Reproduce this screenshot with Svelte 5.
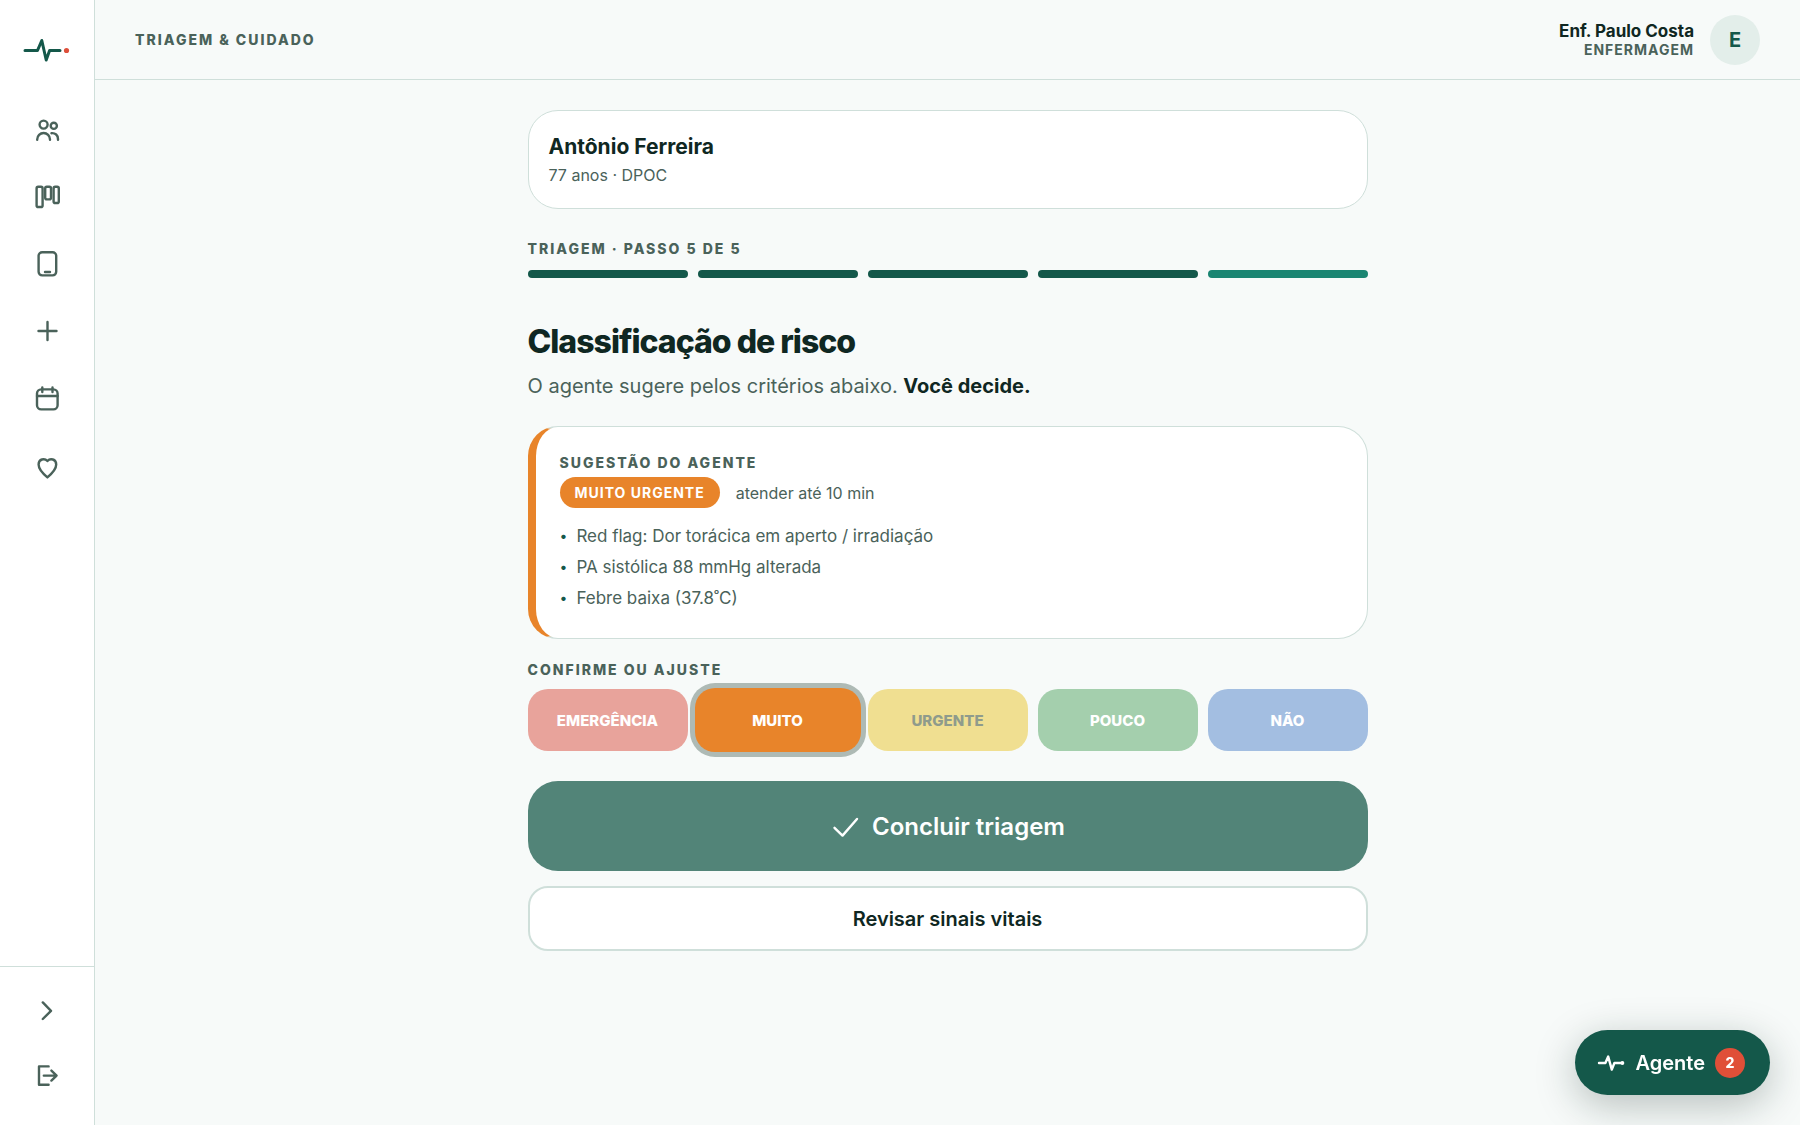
<script lang="ts">
  const user = { name: "Enf. Paulo Costa", role: "Enfermagem" };
  const patient = { name: "Antônio Ferreira", age: 77, condition: "DPOC" };

  const step = 5;
  const steps = [1, 2, 3, 4, 5];

  const reasons = [
    "Red flag: Dor torácica em aperto / irradiação",
    "PA sistólica 88 mmHg alterada",
    "Febre baixa (37.8˚C)",
  ];

  const levels = [
    { id: "emergencia", label: "Emergência" },
    { id: "muito", label: "Muito" },
    { id: "urgente", label: "Urgente" },
    { id: "pouco", label: "Pouco" },
    { id: "nao", label: "Não" },
  ];

  let selected = $state("muito");
</script>

<div class="app">
  <aside class="sidebar">
    <a class="logo" href="#inicio" aria-label="Início">
      <svg width="48" height="28" viewBox="0 0 48 28">
        <path d="M2 14.5h12.5l4.3-10L23.2 24l3.4-9.5H37" />
        <circle cx="43.5" cy="14.5" r="2.6" />
      </svg>
    </a>

    <nav aria-label="Principal">
      <a href="#pacientes" aria-label="Pacientes">
        <svg class="icon" viewBox="0 0 28 28">
          <circle cx="10.6" cy="8.6" r="4" />
          <circle cx="20.8" cy="9.8" r="3.1" />
          <path d="M4.2 23.8v-.4a6.4 6.4 0 0 1 12.8 0v.4M18.400 17.2c3.900-.4 6.600 2 6.600 5.800v.8" />
        </svg>
      </a>
      <a href="#quadro" aria-label="Quadro">
        <svg class="icon" viewBox="0 0 28 28">
          <rect x="3.6" y="3.800" width="6" height="20.200" rx="1.6" />
          <rect x="12.200" y="3.800" width="5.8" height="12.600" rx="1.6" />
          <rect x="20.600" y="3.800" width="5.2" height="16.200" rx="1.6" />
        </svg>
      </a>
      <a href="#dispositivo" aria-label="Dispositivo">
        <svg class="icon" viewBox="0 0 28 28">
          <rect x="5.600" y="2.200" width="17.6" height="23.2" rx="3.600" />
          <path d="M12 22h5" />
        </svg>
      </a>
      <a href="#novo" aria-label="Novo">
        <svg class="icon" viewBox="0 0 28 28">
          <path d="M14.5 5v18M5.500 14h18" />
        </svg>
      </a>
      <a href="#agenda" aria-label="Agenda">
        <svg class="icon" viewBox="0 0 28 28">
          <rect x="4" y="5.400" width="20.6" height="20" rx="4.2" />
          <path d="M4 12h20.600M9.300 3.400v4.600M19.500 3.400v4.600" />
        </svg>
      </a>
      <a href="#cuidado" aria-label="Cuidado">
        <svg class="icon" viewBox="0 0 28 28">
          <path d="M14.4 26.400C9.800 22.600 5.600 18.400 5.600 13.600c0-5.800 6-6.600 8.800-3.600 2.800-3 8.800-2.200 8.800 3.600 0 4.800-4.200 9-8.800 12.800z" />
        </svg>
      </a>
    </nav>

    <div class="bottom">
      <button aria-label="Expandir menu">
        <svg class="icon" viewBox="0 0 28 28">
          <path d="M9.800 5.400l8.2 8.400-8.2 8.200" />
        </svg>
      </button>
      <button aria-label="Sair">
        <svg class="icon" viewBox="0 0 28 28">
          <path d="M15.600 4.400H6v18.400h9.600M10.800 13.600h12.800M18.400 8.600l5.200 5-5.200 5" />
        </svg>
      </button>
    </div>
  </aside>

  <div class="page">
    <header>
      <span class="eyebrow">Triagem &amp; Cuidado</span>
      <div class="user">
        <div class="who">
          <strong>{user.name}</strong>
          <span>{user.role}</span>
        </div>
        <span class="avatar">{user.name[0]}</span>
      </div>
    </header>

    <main>
      <section class="patient">
        <h2>{patient.name}</h2>
        <p>{patient.age} anos · {patient.condition}</p>
      </section>

      <span class="eyebrow">Triagem · Passo {step} de {steps.length}</span>
      <div class="steps">
        {#each steps as n}
          <span class:current={n === step}></span>
        {/each}
      </div>

      <h1>Classificação de risco</h1>
      <p class="lead">
        O agente sugere pelos critérios abaixo. <strong>Você decide.</strong>
      </p>

      <section class="suggestion">
        <span class="eyebrow">Sugestão do agente</span>
        <div class="verdict">
          <span class="pill">Muito urgente</span>
          <span>atender até 10 min</span>
        </div>
        <ul>
          {#each reasons as reason}
            <li>{reason}</li>
          {/each}
        </ul>
      </section>

      <span class="eyebrow" id="levels-label">Confirme ou ajuste</span>
      <div class="levels" role="group" aria-labelledby="levels-label">
        {#each levels as level}
          <button
            class={level.id}
            class:selected={selected === level.id}
            aria-pressed={selected === level.id}
            onclick={() => (selected = level.id)}
          >
            {level.label}
          </button>
        {/each}
      </div>

      <button class="finish">
        <svg width="30" height="30" viewBox="0 0 30 30">
          <path d="M4.500 16.800l8 7.800L27 8" />
        </svg>
        Concluir triagem
      </button>
      <button class="review">Revisar sinais vitais</button>
    </main>
  </div>

  <button class="agent">
    <svg width="28" height="20" viewBox="0 0 28 20">
      <path d="M2 10h6.4l2.8-6.4 3.6 13L17.400 10H25" />
      <circle cx="25.400" cy="10" r="1.900" />
    </svg>
    Agente
    <span class="count">2</span>
  </button>
</div>

<style>
  :global(body) {
    background: #f7faf9;
  }

  .app {
    --ink: #0f2722;
    --muted: #4a625a;
    --line: #cfdfda;
    --green: #14584a;
    display: flex;
    min-height: 100vh;
    background: #f7faf9;
    color: var(--ink);
    font-family: Inter, "Liberation Sans", sans-serif;
  }

  .app * {
    box-sizing: border-box;
  }

  button {
    padding: 0;
    border: 0;
    background: none;
    color: inherit;
    font: inherit;
    cursor: pointer;
  }

  svg {
    fill: none;
    stroke: currentColor;
    stroke-width: 2.4;
    stroke-linecap: round;
    stroke-linejoin: round;
  }

  h1,
  h2,
  p,
  ul {
    margin: 0;
    padding: 0;
  }

  .sidebar {
    position: sticky;
    top: 0;
    display: flex;
    flex-direction: column;
    flex: none;
    width: 95px;
    height: 100vh;
    border-right: 1px solid var(--line);
    background: #fff;
    color: var(--muted);
  }

  .logo {
    display: grid;
    place-items: center;
    height: 100px;
    color: var(--green);
  }

  .logo svg {
    stroke-width: 3;
  }

  .logo circle {
    fill: #dd4f3a;
    stroke: none;
  }

  nav {
    display: flex;
    flex-direction: column;
    flex: 1;
    gap: 7px;
  }

  nav a,
  .bottom button {
    display: grid;
    place-items: center;
    height: 60px;
    color: inherit;
  }

  .icon {
    width: 28px;
    height: 28px;
  }

  .bottom {
    display: flex;
    flex-direction: column;
    gap: 5px;
    padding: 14px 0 19px;
    border-top: 1px solid var(--line);
  }

  .page {
    flex: 1;
    min-width: 0;
  }

  header {
    display: flex;
    align-items: center;
    justify-content: space-between;
    height: 80px;
    padding: 0 40px;
    border-bottom: 1px solid var(--line);
  }

  .eyebrow {
    display: block;
    color: var(--muted);
    font-size: 14px;
    font-weight: 800;
    line-height: 19px;
    letter-spacing: 2px;
    text-transform: uppercase;
  }

  .user {
    display: flex;
    align-items: center;
    gap: 16px;
  }

  .who {
    display: flex;
    flex-direction: column;
    align-items: flex-end;
  }

  .who strong {
    font-size: 17px;
    font-weight: 700;
    line-height: 20px;
  }

  .who span {
    color: var(--muted);
    font-size: 14px;
    font-weight: 700;
    line-height: 17px;
    letter-spacing: 1px;
    text-transform: uppercase;
  }

  .avatar {
    display: grid;
    place-items: center;
    width: 50px;
    height: 50px;
    border-radius: 50%;
    background: #e3eeea;
    color: var(--green);
    font-size: 20px;
    font-weight: 700;
  }

  main {
    display: flex;
    flex-direction: column;
    max-width: 840px;
    margin: 0 auto;
    padding: 30px 0;
  }

  .patient {
    padding: 20px;
    border: 1px solid var(--line);
    border-radius: 30px;
    background: #fff;
  }

  .patient h2 {
    font-size: 21px;
    font-weight: 700;
    line-height: 32px;
  }

  .patient p {
    color: var(--muted);
    font-size: 16px;
    line-height: 25px;
  }

  .patient + .eyebrow {
    margin-top: 30px;
  }

  .steps {
    display: grid;
    grid-template-columns: repeat(5, 1fr);
    gap: 10px;
    margin-top: 12px;
  }

  .steps span {
    height: 8px;
    border-radius: 4px;
    background: var(--green);
  }

  .steps .current {
    background: #1a8572;
  }

  h1 {
    margin-top: 44px;
    font-size: 32px;
    font-weight: 800;
    line-height: 40px;
    letter-spacing: -1px;
  }

  .lead {
    margin-top: 8px;
    color: var(--muted);
    font-size: 20px;
    line-height: 32px;
  }

  .lead strong {
    color: var(--ink);
    font-weight: 700;
  }

  .suggestion {
    margin-top: 24px;
    padding: 26px 24px 24px;
    border: 1px solid var(--line);
    border-left: 8px solid #e8842a;
    border-radius: 30px;
    background: #fff;
    color: var(--muted);
    font-size: 16px;
  }

  .verdict {
    display: flex;
    align-items: center;
    gap: 16px;
    margin-top: 5px;
  }

  .pill {
    padding: 0 15px;
    border-radius: 16px;
    background: #e8842a;
    color: #fff;
    font-size: 14px;
    font-weight: 700;
    line-height: 31px;
    letter-spacing: 1px;
    text-transform: uppercase;
  }

  ul {
    margin-top: 13px;
    list-style: none;
    font-size: 17px;
    line-height: 31px;
  }

  li {
    display: flex;
    gap: 9px;
  }

  li::before {
    content: "•";
    color: var(--green);
    font-size: 14px;
    line-height: 29px;
  }

  .suggestion + .eyebrow {
    margin-top: 21px;
  }

  .levels {
    display: grid;
    grid-template-columns: repeat(5, 1fr);
    gap: 10px;
    margin-top: 10px;
  }

  .levels button {
    height: 62px;
    border-radius: 20px;
    color: #fff;
    font-size: 15px;
    font-weight: 800;
    text-transform: uppercase;
  }

  .levels .emergencia {
    background: #e8a39b;
  }

  .levels .muito {
    background: #e8842a;
  }

  .levels .urgente {
    background: #f0df91;
    color: #8f9b8c;
  }

  .levels .pouco {
    background: #a4cfad;
  }

  .levels .nao {
    background: #a3bee1;
  }

  .levels .selected {
    height: 64px;
    margin: -1px -3px;
    box-shadow: 0 0 0 5px #aebab5;
  }

  .finish {
    display: flex;
    align-items: center;
    justify-content: center;
    gap: 12px;
    height: 90px;
    margin-top: 30px;
    border-radius: 30px;
    background: #528478;
    color: #fff;
    font-size: 24px;
    font-weight: 600;
  }

  .review {
    height: 65px;
    margin-top: 15px;
    border: 2px solid var(--line);
    border-radius: 20px;
    background: #fff;
    font-size: 20px;
    font-weight: 600;
  }

  .agent {
    position: fixed;
    right: 30px;
    bottom: 30px;
    display: flex;
    align-items: center;
    gap: 10px;
    height: 65px;
    padding: 0 25px 0 22px;
    border-radius: 33px;
    background: var(--green);
    box-shadow: 0 10px 40px rgba(15, 39, 34, 0.28);
    color: #fff;
    font-size: 20px;
    font-weight: 600;
  }

  .agent circle {
    fill: currentColor;
    stroke: none;
  }

  .count {
    display: grid;
    place-items: center;
    width: 30px;
    height: 30px;
    border-radius: 50%;
    background: #e04f38;
    font-size: 14px;
    font-weight: 800;
  }
</style>
